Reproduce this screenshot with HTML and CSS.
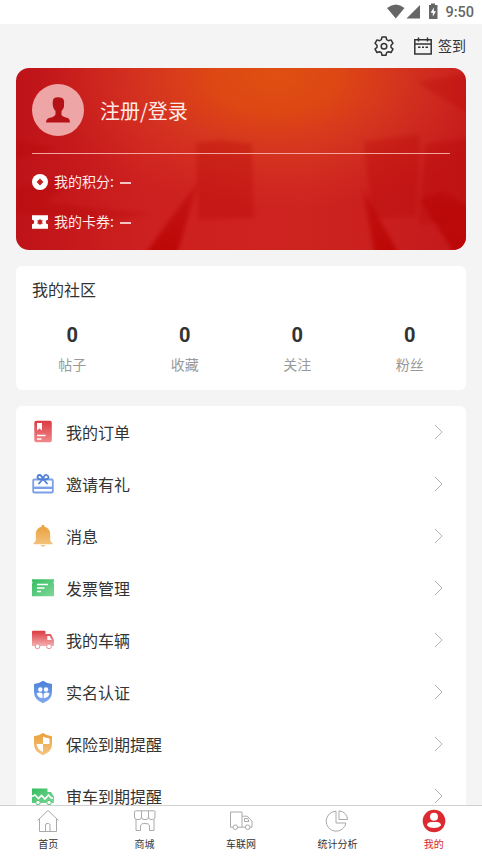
FILE: index.html
```html
<!DOCTYPE html>
<html lang="zh-CN">
<head>
<meta charset="utf-8">
<title>我的</title>
<link rel="stylesheet" href="styles.css">
</head>
<body>
<div class="app">
  <header class="status">
    <svg class="status-icons" width="54" height="18" viewBox="0 0 54 18" fill="#666">
      <path d="M0 5Q9-2 17.500 5L8.800 15.500Z"/>
      <path d="M33 2V15.500H19.500Z"/>
      <path fill-rule="evenodd" d="M42 2h2V.500h4V2h2.500v14H42ZM46.800 4.500L43.600 9.700h2.200v3.800L49 8.300h-2.200Z"/>
    </svg>
    <span class="clock">9:50</span>
  </header>
  <div class="toolbar">
    <svg class="gear" width="20" height="20" viewBox="0 0 20 20" fill="none" stroke="#333" stroke-width="1.500" stroke-linejoin="round">
      <path d="M8 1h4l.6 2.700 1.800 1 2.600-.8 2 3.400-2 1.900v2l2 1.900-2 3.400-2.600-.8-1.800 1L12 19.200H8l-.6-2.500-1.800-1-2.600.8-2-3.400 2-1.900v-2L1 7.300l2-3.400 2.600.8 1.800-1Z"/>
      <circle cx="10" cy="10.200" r="2.800"/>
    </svg>
    <svg class="calendar" width="18" height="18" viewBox="0 0 18 18" fill="none" stroke="#333" stroke-width="1.500">
      <path d="M.8 2.800h16.400v14.200H.8ZM.8 7h16.400M4.500 .5v4M13.500 .5v4M4 10.200h2.500M8 10.200h2M11.500 10.200H14"/>
    </svg>
    <span>签到</span>
  </div>

  <main class="content">
    <section class="member">
      <svg class="member-bg" viewBox="0 0 450 182" preserveAspectRatio="none">
        <defs>
          <linearGradient id="base" x1="0" y1="0" x2="1" y2="0"><stop stop-color="#be1318"/><stop offset=".28" stop-color="#cd2020"/><stop offset=".65" stop-color="#ce2420"/><stop offset="1" stop-color="#c4191c"/></linearGradient>
          <radialGradient id="glow" gradientUnits="userSpaceOnUse" cx="0" cy="0" r="1" gradientTransform="matrix(235 0 0 135 258 8)"><stop stop-color="#e05010"/><stop offset=".28" stop-color="#de4a13" stop-opacity=".92"/><stop offset=".6" stop-color="#da3f20" stop-opacity=".55"/><stop offset="1" stop-color="#d63322" stop-opacity="0"/></radialGradient>
          <linearGradient id="beam" x1="0" y1="0" x2="0" y2="1"><stop stop-color="#b60808" stop-opacity=".3"/><stop offset="1" stop-color="#b90508" stop-opacity=".8"/></linearGradient>
          <filter id="soft"><feGaussianBlur stdDeviation="2"/></filter>
        </defs>
        <path fill="url(#base)" d="M0 0h450v182H0z"/>
        <path fill="url(#glow)" d="M0 0h450v182H0z"/>
        <g filter="url(#soft)">
          <path fill="#b40d12" opacity=".28" d="M180 75l25-3 31 4 2 74-56 2zM348 74l56-8-4 82-44 3zM410 76l45-7v85l-53 2z"/>
          <path fill="#b40d12" opacity=".25" d="M401 14l55-9v43zM0 72l42 8-42 12zM0 120l65-15-35 30 108 11-60 8-78-10z"/>
          <path fill="url(#beam)" d="M183 112l-54 74h32zM346 120l37 66h-24zM404 132l22-9 30 18v45h-17z"/>
        </g>
      </svg>
      <div class="profile">
        <svg class="avatar" width="52" height="52" viewBox="0 0 52 52">
          <circle cx="26" cy="26" r="26" fill="#eea5a5"/>
          <path fill="#b51217" d="M21 16Q22 12.500 28 13.500Q33 14 32 20Q32.500 24 29.500 27V31Q31 33 36 34Q38 35 38 38.500H14Q14 35 17 34Q22 33 23.500 30.500V27Q19.500 23 21 16Z"/>
        </svg>
        <span class="login">注册/登录</span>
      </div>
      <div class="asset">
        <svg width="16" height="16" viewBox="0 0 16 16"><circle cx="8" cy="8" r="8" fill="#fff"/><path fill="#c51e20" d="M8 4.600L11.400 8 8 11.400 4.600 8Z"/></svg>
        <span>我的积分:</span><i class="dash"></i>
      </div>
      <div class="asset">
        <svg width="16" height="16" viewBox="0 0 16 16"><path fill="#fff" d="M0 1.200h16v4.600a2.200 2.200 0 0 0 0 4.400v4.600H0v-4.600a2.200 2.200 0 0 0 0-4.400Z"/><path fill="#c51e20" d="M8 4.700l1 1.600h1.900L10 8l.9 1.700H9l-1 1.600-1-1.600H5.100L6 8l-.9-1.700H7Z"/></svg>
        <span>我的卡券:</span><i class="dash"></i>
      </div>
    </section>

    <section class="community">
      <h2>我的社区</h2>
      <div class="stats">
        <div><b>0</b><span>帖子</span></div>
        <div><b>0</b><span>收藏</span></div>
        <div><b>0</b><span>关注</span></div>
        <div><b>0</b><span>粉丝</span></div>
      </div>
    </section>

    <section class="menu">
      <svg class="defs" width="0" height="0"><defs>
        <linearGradient id="red" x1="0" y1="0" x2="0" y2="1"><stop stop-color="#dc3a40"/><stop offset="1" stop-color="#f0898b"/></linearGradient>
        <linearGradient id="truck" x1="0" y1="0" x2="0" y2="1"><stop stop-color="#db3a40"/><stop offset="1" stop-color="#f5b0b1"/></linearGradient>
        <linearGradient id="gold" x1="0" y1="0" x2="0" y2="1"><stop stop-color="#eaa03a"/><stop offset="1" stop-color="#f4c583"/></linearGradient>
        <linearGradient id="green" x1="0" y1="0" x2="1" y2="1"><stop stop-color="#34bd5e"/><stop offset="1" stop-color="#7fd79a"/></linearGradient>
        <linearGradient id="blue" x1="0" y1="0" x2="0" y2="1"><stop stop-color="#4a80d8"/><stop offset="1" stop-color="#82aaf0"/></linearGradient>
      </defs></svg>
      <div class="row">
        <svg class="ico" viewBox="0 0 24 24"><rect x="3.300" y=".8" width="17.500" height="21.500" rx="2" fill="url(#red)"/><path fill="#fff" d="M6 3h5v7.500L8.500 8.500 6 10.500Z"/><path stroke="#fff" stroke-width="1.300" d="M6 15.500h8.500M6 19h4.500"/></svg>
        <span>我的订单</span><svg class="arrow" viewBox="0 0 9 16"><path d="M1 1l7 7-7 7"/></svg>
      </div>
      <div class="row">
        <svg class="ico" viewBox="0 0 24 24" fill="none" stroke="#7ba0e6" stroke-width="1.800"><rect x="2.200" y="7.500" width="19.600" height="13" rx="1"/><path d="M3 15.800h18.500" stroke-width="2.400"/><path d="M12 7L7.500 12M12 7l4.500 5M12 7Q10.500 3 8.500 3T6.500 5.500Q7 7.500 12 7.500Q17.500 7.500 17.500 5.500T15.500 3T12 7" stroke="#4f7fd6"/></svg>
        <span>邀请有礼</span><svg class="arrow" viewBox="0 0 9 16"><path d="M1 1l7 7-7 7"/></svg>
      </div>
      <div class="row">
        <svg class="ico" viewBox="0 0 24 24" fill="url(#gold)"><path d="M12 .8Q13.500 .8 13.500 2.800Q19.200 4.300 19.200 10.500V16Q19.200 18 21.500 19V20.200H2.500V19Q4.800 18 4.800 16V10.500Q4.800 4.300 10.500 2.800Q10.500 .8 12 .8ZM9.500 21h5Q14 22.800 12 22.800T9.500 21Z"/></svg>
        <span>消息</span><svg class="arrow" viewBox="0 0 9 16"><path d="M1 1l7 7-7 7"/></svg>
      </div>
      <div class="row">
        <svg class="ico" viewBox="0 0 24 24"><path fill="url(#green)" d="M1 3.300h22v2l-.7 1.200.7 1.200V20.300H1V7.700l.7-1.200L1 5.300Z"/><path stroke="#fff" stroke-width="1.300" d="M6 8.500h11M6 12h7.500M6 15.500h4"/></svg>
        <span>发票管理</span><svg class="arrow" viewBox="0 0 9 16"><path d="M1 1l7 7-7 7"/></svg>
      </div>
      <div class="row">
        <svg class="ico" viewBox="0 0 24 24"><path fill="url(#truck)" d="M2 2.800h11.500q1 0 1 1V6H19q1 0 1.500 1l2.500 5v6H1V3.800q0-1 1-1Z"/><path fill="#fff" d="M16.300 8h2.400l2 4h-4.400Z"/><g fill="#fff" stroke="#e88e90" stroke-width="1"><circle cx="6.500" cy="18.300" r="2.400"/><circle cx="18" cy="18.300" r="2.400"/></g></svg>
        <span>我的车辆</span><svg class="arrow" viewBox="0 0 9 16"><path d="M1 1l7 7-7 7"/></svg>
      </div>
      <div class="row">
        <svg class="ico" viewBox="0 0 24 24"><path fill="url(#blue)" d="M12 .7Q15.500 3.300 21 4V12Q21 19.500 12 23.200Q3 19.500 3 12V4Q8.500 3.300 12 .7Z"/><g fill="#fff"><circle cx="9.300" cy="9.500" r="2.200"/><circle cx="15" cy="9.500" r="2.200"/><path d="M5.600 13.500q3.300-2.300 5.900.2v4.500q-4.500-.2-5.900-4.700ZM18.600 13.500q-3.300-2.300-5.900.2v4.500q4.500-.2 5.900-4.700Z"/></g></svg>
        <span>实名认证</span><svg class="arrow" viewBox="0 0 9 16"><path d="M1 1l7 7-7 7"/></svg>
      </div>
      <div class="row">
        <svg class="ico" viewBox="0 0 24 24"><path fill="url(#gold)" d="M12 1Q15.500 3.600 21 4.300V12Q21 19.500 12 23.200Q3 19.500 3 12V4.300Q8.500 3.600 12 1Z"/><path fill="#fff" d="M12 12V4.500Q15 6 18.500 6.500V12ZM12 12v8Q6 17 5.500 12Z"/></svg>
        <span>保险到期提醒</span><svg class="arrow" viewBox="0 0 9 16"><path d="M1 1l7 7-7 7"/></svg>
      </div>
      <div class="row">
        <svg class="ico" viewBox="0 0 24 24"><path fill="url(#green)" d="M1 4.500h15.500V8H20l3 4.500V19H1Z"/><path fill="none" stroke="#fff" stroke-width="1.600" d="M1 12.500l3-1.500 3.500 3.500 3-3 3.500 3.500 3.500-4 2.500 3h2"/><g fill="#fff" stroke="#56c777"><circle cx="7" cy="18.500" r="2.200"/><circle cx="18" cy="18.500" r="2.200"/></g></svg>
        <span>审车到期提醒</span><svg class="arrow" viewBox="0 0 9 16"><path d="M1 1l7 7-7 7"/></svg>
      </div>
    </section>
  </main>

  <nav class="tabs">
    <a><svg viewBox="0 0 24 24"><path d="M1.500 11.500L12 1.500l10.500 10M3.500 10v12.500h17V10M9.500 22.500V16q0-1.500 1.500-1.500h1.500q1.500 0 1.500 1.500v6.500"/></svg><span>首页</span></a>
    <a><svg viewBox="0 0 24 24"><path d="M2.500 1.800h18.500q1 0 1 1V8q0 2.500-2.500 2.500H18q-2.500 0-2.500-2.500V2M15.500 8q0 2.500-2.500 2.500h-2Q8.500 10.500 8.500 8V2M8.500 8Q8.500 10.500 6 10.500H4Q1.500 10.500 1.500 8V2.800q0-1 1-1M3 10.500v11h4.500V17q0-2.500 4.500-2.500t4.500 2.500v4.500H21v-11"/></svg><span>商城</span></a>
    <a><svg viewBox="0 0 24 24"><path d="M4 18.200H1.500V3H13v15.200H8.500M13 7.200h4.500q1.500 0 2.500 2l3 3v6h-2M16.500 18.200H13M15.500 9.500h3l1.500 3h-4.500Z"/><circle cx="6.300" cy="18.200" r="2.300"/><circle cx="18.700" cy="18.200" r="2.300"/></svg><span>车联网</span></a>
    <a><svg viewBox="0 0 24 24"><path d="M11 2.200A10 10 0 1 0 21 14H11ZM14 1.800V10.500h8.500Q22 3 14 1.800Z"/></svg><span>统计分析</span></a>
    <a class="active"><svg viewBox="0 0 24 24"><circle cx="12" cy="12" r="11.300" fill="#dc2b30" stroke="none"/><g fill="#fff" stroke="none"><circle cx="12" cy="7.800" r="4"/><path d="M5 16.500q0-3 3.500-3.500h7q3.500.5 3.500 3.500-2.500 2.500-7 2.500T5 16.500Z"/></g></svg><span>我的</span></a>
  </nav>
</div>
</body>
</html>
```
FILE: styles.css
```css
* { box-sizing: border-box; }
body {
  margin: 0;
  background: #f4f4f4;
  color: #333;
  font-family: "Noto Sans CJK SC", sans-serif;
}
svg { display: block; flex: none; }
.app {
  height: 856px;
  display: flex;
  flex-direction: column;
  overflow: hidden;
}
.status {
  height: 24px;
  flex: none;
  background: #fff;
  display: flex;
  align-items: center;
  justify-content: flex-end;
  gap: 4px;
  padding-right: 8px;
}
.clock {
  font: 500 14.5px/24px Roboto, sans-serif;
  color: #666;
  padding-top: 1px;
}
.toolbar {
  height: 44px;
  flex: none;
  display: flex;
  align-items: center;
  justify-content: flex-end;
  padding-right: 16px;
  font-size: 14px;
}
.toolbar span { padding-bottom: 2px; }
.gear { margin-right: 20px; }
.calendar { margin-right: 6px; }
.content {
  flex: 1;
  min-height: 0;
  overflow: hidden;
  padding: 0 16px;
}
.member {
  position: relative;
  height: 182px;
  padding: 0 16px;
  border-radius: 13px;
  overflow: hidden;
  color: #fff;
}
.member-bg {
  position: absolute;
  inset: 0;
  width: 100%;
  height: 100%;
}
.profile, .asset { position: relative; display: flex; align-items: center; }
.profile {
  height: 86px;
  padding-bottom: 1px;
  border-bottom: 1.5px solid #f3a69f;
}
.login { margin-left: 16px; font-size: 20px; color: #ffeae6; }
.profile + .asset { margin-top: 8px; }
.asset { height: 40px; font-size: 14px; color: #ffeae8; }
.asset span { margin-left: 6px; padding-bottom: 2px; }
.dash {
  width: 11px;
  height: 2px;
  margin: 2px 0 0 6px;
  background: #f6c4c2;
}
.community {
  height: 124px;
  margin-top: 16px;
  border-radius: 6px;
  background: #fff;
}
.community h2 {
  margin: 0;
  padding: 11px 16px 0;
  font-size: 16px;
  line-height: 24px;
  font-weight: 400;
}
.stats { display: flex; padding-top: 21px; }
.stats div {
  flex: 1;
  display: flex;
  flex-direction: column;
  align-items: center;
}
.stats b { font: 700 20px/26px Roboto, sans-serif; }
.stats span { margin-top: 6px; font-size: 14px; line-height: 20px; color: #999; }
.menu {
  margin-top: 16px;
  border-radius: 6px 6px 0 0;
  background: #fff;
}
.defs { position: absolute; }
.row {
  height: 52px;
  display: flex;
  align-items: center;
  padding: 0 23px 0 15px;
  font-size: 16px;
}
.ico { width: 24px; height: 24px; margin-right: 11px; }
.row span { flex: 1; padding-bottom: 1px; }
.arrow {
  width: 9px;
  height: 16px;
  fill: none;
  stroke: #b4b4b4;
  stroke-width: 1;
}
.tabs {
  height: 51px;
  flex: none;
  display: flex;
  background: #fff;
  border-top: 1px solid #d0d0d0;
}
.tabs a {
  flex: 1;
  display: flex;
  flex-direction: column;
  align-items: center;
  padding-top: 3px;
  font-size: 10px;
  line-height: 14px;
}
.tabs svg {
  width: 24px;
  height: 24px;
  margin-bottom: 4px;
  fill: none;
  stroke: #aaa;
  stroke-width: 1;
}
.tabs .active { color: #d8262c; }
```
